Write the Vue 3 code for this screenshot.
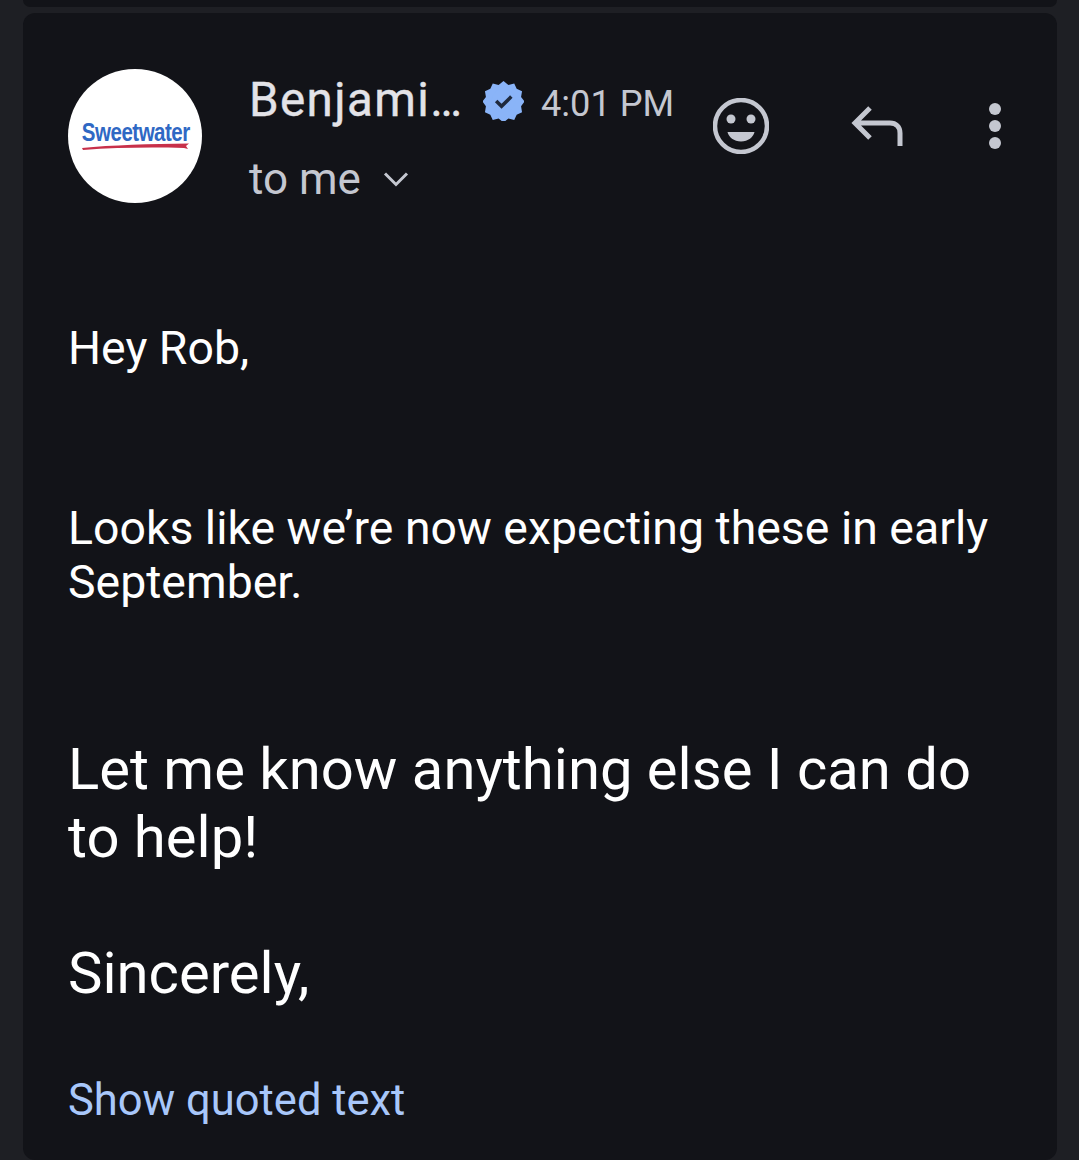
<template>
  <div class="screen">
    <div class="card card--prev"></div>
    <div class="card">
      <header class="head">
        <div class="avatar">
          <div class="logo">
            <span class="logo__word">Sweetwater</span>
            <svg class="logo__swoosh" viewBox="0 0 110 9" width="110" height="9">
              <path d="M1 6 C30 3 70 2 108 1.500 L105 4 L107 7 L103 6 C70 5 35 5.500 2 8Z" fill="#c8304a" />
            </svg>
          </div>
        </div>
        <div class="who">
          <div class="who__top">
            <span class="who__name">Benjami…</span>
            <svg class="badge" viewBox="0 0 42 42" width="41" height="41">
              <path fill="#8ab4f8" d="M21 1l5 4 6-1.500 2.500 5.500 5.500 2.500-1 6 3.500 4.500-3.500 5 1 6-5.500 2.500-2.500 5.500-6-1.500-5 4-5-4-6 1.500-2.500-5.500-5.500-2.500 1-6-3.500-5 3.500-4.500-1-6 5.500-2.500 2.500-5.500 6 1.500z" />
              <circle cx="21" cy="21" r="12" fill="#8ab4f8" />
              <path d="M13.500 21.500l5.500 5.500 10-10" fill="none" stroke="#1f2a3d" stroke-width="3.600" />
            </svg>
            <span class="who__time">4:01 PM</span>
          </div>
          <div class="who__to">
            <span>to me</span>
            <svg viewBox="0 0 26 16" width="26" height="16" class="chev">
              <path d="M2 2.500l11 11 11-11" fill="none" stroke="#c4c7d0" stroke-width="3" />
            </svg>
          </div>
        </div>
        <div class="actions">
          <svg viewBox="0 0 56 56" width="56" height="56" class="act-smile">
            <circle cx="28" cy="28" r="26" fill="none" stroke="#c4c7d0" stroke-width="4.500" />
            <circle cx="18" cy="21" r="4.500" fill="#c4c7d0" />
            <circle cx="38" cy="21" r="4.500" fill="#c4c7d0" />
            <path d="M14.500 34h27c-1 5-6.500 9.500-13.500 9.500s-12.500-4.500-13.500-9.500z" fill="#c4c7d0" />
          </svg>
          <svg viewBox="0 0 52 42" width="52" height="42" class="act-reply">
            <path d="M19 3L4 18l15 15M4 18h35c6 0 10 4 10 10v13" fill="none" stroke="#c4c7d0" stroke-width="5" />
          </svg>
          <svg viewBox="0 0 12 46" width="12" height="46" class="act-more">
            <circle cx="6" cy="6" r="6" fill="#c4c7d0" />
            <circle cx="6" cy="23" r="6" fill="#c4c7d0" />
            <circle cx="6" cy="40" r="6" fill="#c4c7d0" />
          </svg>
        </div>
      </header>

      <div class="body">
        <p class="msg msg--hey">Hey Rob,</p>
        <p class="msg msg--looks">Looks like we’re now expecting these in early September.</p>
        <p class="msg-lg msg--let">Let me know anything else I can do to help!</p>
        <p class="msg-lg msg--sincerely">Sincerely,</p>
        <a class="quoted">Show quoted text</a>
      </div>
    </div>
  </div>
</template>

<script setup>
</script>

<style>
html, body { margin: 0; background: #1e1f24; }
</style>

<style scoped>
.screen {
  width: 1079px; height: 1160px; overflow: hidden;
  background: #1e1f24;
  padding: 0 22px 0 23px; box-sizing: border-box;
  display: flex; flex-direction: column; gap: 6px;
  font-family: Roboto, sans-serif;
}
.card {
  background: #121318;
  border-radius: 12px;
  flex: 1;
  padding: 56px 0 0 45px;
}
.card--prev {
  flex: none; height: 7px; padding: 0;
  border-radius: 0 0 12px 12px;
}
.head { display: flex; align-items: flex-start; }
.avatar {
  width: 134px; height: 134px; border-radius: 50%;
  background: #fff; flex: none;
  display: flex; align-items: center; justify-content: center;
}
.logo { display: flex; flex-direction: column; align-items: center; margin: 0 0 1px 2px; }
.logo__word {
  font-family: "Liberation Sans", sans-serif; font-weight: 700;
  font-size: 25px; line-height: 24px; color: #2f68c4;
  letter-spacing: -0.6px;
  transform: scaleX(0.82);
}
.logo__swoosh { display: block; margin-top: -2px; }
.who { margin-left: 47px; width: 440px; flex: none; }
.who__top { display: flex; align-items: center; height: 62px; }
.who__name { width: 214px; font-size: 47.500px; letter-spacing: 1.400px; color: #e3e3e8; line-height: 62px; white-space: nowrap; -webkit-text-stroke: 0.400px #e3e3e8; }
.badge { margin-left: 20px; flex: none; }
.who__time { font-size: 36.200px; color: #c4c7d0; margin: 6px 0 0 17px; }
.who__to {
  display: flex; align-items: center; gap: 22px;
  font-size: 44px; color: #c4c7d0; height: 50px; margin-top: 23px;
}
.actions { display: flex; align-items: flex-start; }
.act-smile { margin: 29px 0 0 24px; flex: none; }
.act-reply { margin: 36px 0 0 82px; flex: none; }
.act-more { margin: 34px 0 0 86px; flex: none; }
.body { margin-top: 117px; color: #fff; }
.msg, .msg-lg { margin: 0; width: 950px; }
.msg { font-size: 46.400px; line-height: 54px; }
.msg-lg { font-size: 58px; line-height: 68px; }
.msg--looks { margin-top: 126px; }
.msg--let { margin-top: 126px; }
.msg--sincerely { margin-top: 68px; }
.quoted { display: block; margin-top: 67px; font-size: 43.500px; line-height: 54px; color: #a8c7fa; }
</style>
